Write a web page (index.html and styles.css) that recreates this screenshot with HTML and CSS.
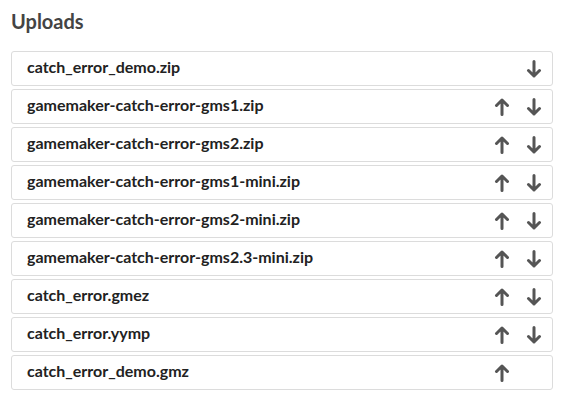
FILE: index.html
```html
<!DOCTYPE html>
<html>
<head>
<meta charset="utf-8">
<link rel="stylesheet" href="styles.css">
</head>
<body>
<h2 class="title">Uploads</h2>
<div class="list">
  <div class="row"><span class="name">catch_error_demo.zip</span><span class="actions"><span class="slot"></span><span class="slot"><svg viewBox="0 0 16 18" class="arrow"><path d="M8 1.5V16M2.5 10.5L8 16l5.5-5.5"/></svg></span></span></div>
  <div class="row"><span class="name">gamemaker-catch-error-gms1.zip</span><span class="actions"><span class="slot"><svg viewBox="0 0 16 18" class="arrow"><path d="M8 16.5V2M2.5 7.5L8 2l5.5 5.5"/></svg></span><span class="slot"><svg viewBox="0 0 16 18" class="arrow"><path d="M8 1.5V16M2.5 10.5L8 16l5.5-5.5"/></svg></span></span></div>
  <div class="row"><span class="name">gamemaker-catch-error-gms2.zip</span><span class="actions"><span class="slot"><svg viewBox="0 0 16 18" class="arrow"><path d="M8 16.5V2M2.5 7.5L8 2l5.5 5.5"/></svg></span><span class="slot"><svg viewBox="0 0 16 18" class="arrow"><path d="M8 1.5V16M2.5 10.5L8 16l5.5-5.5"/></svg></span></span></div>
  <div class="row"><span class="name">gamemaker-catch-error-gms1-mini.zip</span><span class="actions"><span class="slot"><svg viewBox="0 0 16 18" class="arrow"><path d="M8 16.5V2M2.5 7.5L8 2l5.5 5.5"/></svg></span><span class="slot"><svg viewBox="0 0 16 18" class="arrow"><path d="M8 1.5V16M2.5 10.5L8 16l5.5-5.5"/></svg></span></span></div>
  <div class="row"><span class="name">gamemaker-catch-error-gms2-mini.zip</span><span class="actions"><span class="slot"><svg viewBox="0 0 16 18" class="arrow"><path d="M8 16.5V2M2.5 7.5L8 2l5.5 5.5"/></svg></span><span class="slot"><svg viewBox="0 0 16 18" class="arrow"><path d="M8 1.5V16M2.5 10.5L8 16l5.5-5.5"/></svg></span></span></div>
  <div class="row"><span class="name">gamemaker-catch-error-gms2.3-mini.zip</span><span class="actions"><span class="slot"><svg viewBox="0 0 16 18" class="arrow"><path d="M8 16.5V2M2.5 7.5L8 2l5.5 5.5"/></svg></span><span class="slot"><svg viewBox="0 0 16 18" class="arrow"><path d="M8 1.5V16M2.5 10.5L8 16l5.5-5.5"/></svg></span></span></div>
  <div class="row"><span class="name">catch_error.gmez</span><span class="actions"><span class="slot"><svg viewBox="0 0 16 18" class="arrow"><path d="M8 16.5V2M2.5 7.5L8 2l5.5 5.5"/></svg></span><span class="slot"><svg viewBox="0 0 16 18" class="arrow"><path d="M8 1.5V16M2.5 10.5L8 16l5.5-5.5"/></svg></span></span></div>
  <div class="row"><span class="name">catch_error.yymp</span><span class="actions"><span class="slot"><svg viewBox="0 0 16 18" class="arrow"><path d="M8 16.5V2M2.5 7.5L8 2l5.5 5.5"/></svg></span><span class="slot"><svg viewBox="0 0 16 18" class="arrow"><path d="M8 1.5V16M2.5 10.5L8 16l5.5-5.5"/></svg></span></span></div>
  <div class="row"><span class="name">catch_error_demo.gmz</span><span class="actions"><span class="slot"><svg viewBox="0 0 16 18" class="arrow"><path d="M8 16.5V2M2.5 7.5L8 2l5.5 5.5"/></svg></span><span class="slot"></span></span></div>
</div>
</body>
</html>
```
FILE: styles.css
```css
html, body {
  margin: 0;
  background: #fff;
}
body {
  padding: 9px 11px;
  font-family: Lato, "Liberation Sans", sans-serif;
}
.title {
  margin: 0 0 18px;
  font-size: 20px;
  font-weight: 700;
  line-height: 24px;
  color: #444;
}
.list {
  display: flex;
  flex-direction: column;
  gap: 3px;
}
.row {
  display: flex;
  align-items: center;
  justify-content: space-between;
  height: 35px;
  box-sizing: border-box;
  border: 1px solid #dcdcdc;
  border-radius: 3px;
  padding: 0 10px 0 15px;
}
.name {
  font-size: 16px;
  font-weight: 700;
  color: #222;
  padding-bottom: 4px;
}
.actions {
  display: flex;
  gap: 16px;
}
.slot {
  width: 16px;
  height: 18px;
  display: flex;
}
.arrow {
  width: 16px;
  height: 18px;
  fill: none;
  stroke: #555;
  stroke-width: 3;
  stroke-linecap: round;
  stroke-linejoin: round;
}
```
